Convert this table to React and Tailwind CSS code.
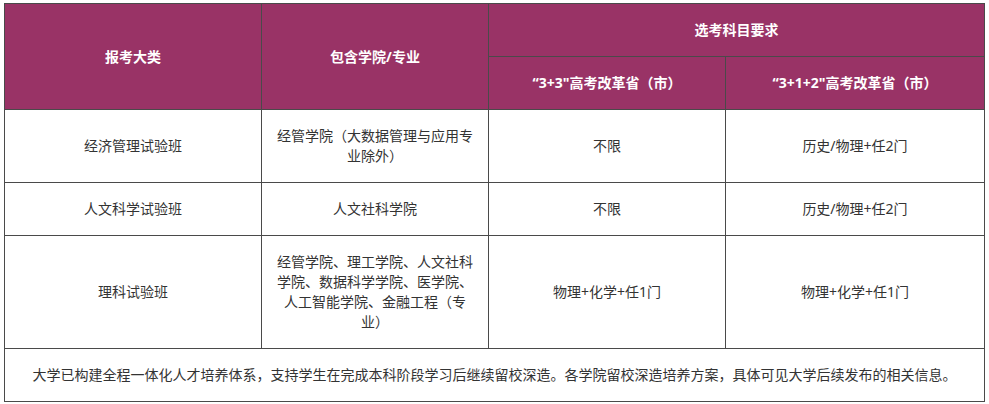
import React from 'react';

const rows = [
  {
    name: '经济管理试验班',
    college: '经管学院（大数据管理与应用专业除外）',
    a: '不限',
    b: '历史/物理+任2门',
  },
  {
    name: '人文科学试验班',
    college: '人文社科学院',
    a: '不限',
    b: '历史/物理+任2门',
  },
  {
    name: '理科试验班',
    college: '经管学院、理工学院、人文社科学院、数据科学学院、医学院、人工智能学院、金融工程（专业）',
    a: '物理+化学+任1门',
    b: '物理+化学+任1门',
  },
];

const th = 'border border-[#4a4a4a] bg-[#993366] text-white font-bold px-[10px] py-4 text-center align-middle';
const td = 'border border-[#4a4a4a] text-[#333] px-[10px] py-4 text-center align-middle';

export default function App() {
  return (
    <div
      className="pl-[4px] pt-[3px] bg-white text-[14px] leading-[20px] [text-spacing-trim:space-all]"
      style={{ fontFamily: '"Noto Sans", "Noto Sans CJK SC", sans-serif' }}
    >
      <table className="table-fixed border-collapse w-[980px]">
        <colgroup>
          <col className="w-[257px]" />
          <col className="w-[227px]" />
          <col className="w-[237px]" />
          <col className="w-[259px]" />
        </colgroup>
        <thead>
          <tr>
            <th rowSpan={2} className={th}>报考大类</th>
            <th rowSpan={2} className={th}>包含学院/专业</th>
            <th colSpan={2} className={th}>选考科目要求</th>
          </tr>
          <tr>
            <th className={th}>“3+3"高考改革省（市）</th>
            <th className={th}>“3+1+2"高考改革省（市）</th>
          </tr>
        </thead>
        <tbody>
          {rows.map((r, i) => (
            <tr key={i}>
              <td className={td}>{r.name}</td>
              <td className={td}>{r.college}</td>
              <td className={td}>{r.a}</td>
              <td className={td}>{r.b}</td>
            </tr>
          ))}
          <tr>
            <td colSpan={4} className={td}>
              大学已构建全程一体化人才培养体系，支持学生在完成本科阶段学习后继续留校深造。各学院留校深造培养方案，具体可见大学后续发布的相关信息。
            </td>
          </tr>
        </tbody>
      </table>
    </div>
  );
}
